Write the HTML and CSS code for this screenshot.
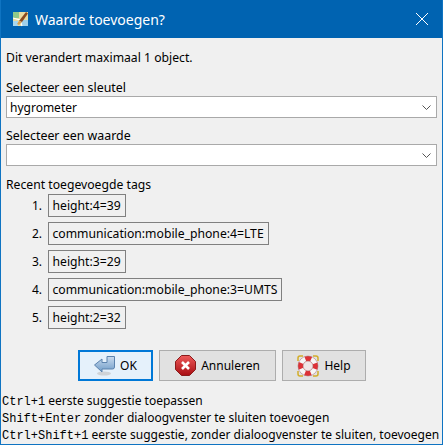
FILE: index.html
```html
<!DOCTYPE html>
<html lang="nl">

<head>
  <meta charset="UTF-8">
  <title>Waarde toevoegen?</title>
  <link rel="stylesheet" href="styles.css">
</head>

<body>
  <div class="window">
    <div class="titlebar">
      <svg class="app-icon" width="16" height="16" viewBox="0 0 16 16">
        <rect x="0" y="1" width="15" height="14" fill="#e8dca0" />
        <path d="M0 1h6v6H0z" fill="#8fc98a" />
        <path d="M8 9h7v6H8z" fill="#9fd0ea" />
        <path d="M0 10h5v5H0z" fill="#a8d7ee" />
        <path d="M0 7l7 2 2 6" fill="none" stroke="#fff" stroke-width="1.2" />
        <path d="M6 10L13 1l2 1.5L9 11z" fill="#8a4a1e" />
        <path d="M6 10l3 1-3 3-2-1z" fill="#d8a050" />
      </svg>
      <span class="title">Waarde toevoegen?</span>
      <svg class="close" width="12" height="12" viewBox="0 0 12 12">
        <path d="M0 0l12 12M12 0L0 12" stroke="#fff" stroke-width="1" fill="none" />
      </svg>
    </div>
    <div class="content">
      <p class="intro">Dit verandert maximaal 1 object.</p>

      <label class="field-label">Selecteer een sleutel</label>
      <div class="combo">
        <span>hygrometer</span>
        <svg width="9" height="5" viewBox="0 0 9 5">
          <path d="M0.500 0.500l4 4 4-4" fill="none" stroke="#555" />
        </svg>
      </div>

      <label class="field-label second">Selecteer een waarde</label>
      <div class="combo">
        <span></span>
        <svg width="9" height="5" viewBox="0 0 9 5">
          <path d="M0.500 0.500l4 4 4-4" fill="none" stroke="#555" />
        </svg>
      </div>

      <div class="recent-title">Recent toegevoegde tags</div>
      <div class="recent">
        <div class="recent-row"><span class="num">1.</span><span class="chip">height:4=39</span></div>
        <div class="recent-row"><span class="num">2.</span><span class="chip">communication:mobile_phone:4=LTE</span></div>
        <div class="recent-row"><span class="num">3.</span><span class="chip">height:3=29</span></div>
        <div class="recent-row"><span class="num">4.</span><span class="chip">communication:mobile_phone:3=UMTS</span></div>
        <div class="recent-row"><span class="num">5.</span><span class="chip">height:2=32</span></div>
      </div>

      <div class="buttons">
        <button class="btn btn-ok">
          <svg width="21" height="21" viewBox="0 0 21 21">
            <defs>
              <linearGradient id="okFill" x1="0" y1="0" x2="0" y2="1">
                <stop offset="0" stop-color="#c9dbee" />
                <stop offset="1" stop-color="#6f9cc8" />
              </linearGradient>
            </defs>
            <ellipse cx="10" cy="18.500" rx="7" ry="2" fill="#cfd3d7" />
            <path d="M0.500 10L8 4v3.500h5V1.500h7.500V12q0 2-2 2H8v3z" fill="url(#okFill)" stroke="#5b82ad" stroke-linejoin="round" />
          </svg>
          <span>OK</span>
        </button>
        <button class="btn btn-cancel">
          <svg width="21" height="21" viewBox="0 0 21 21">
            <defs>
              <linearGradient id="stopFill" x1="0" y1="0" x2="0" y2="1">
                <stop offset="0" stop-color="#ee5a5a" />
                <stop offset="1" stop-color="#a80d12" />
              </linearGradient>
            </defs>
            <path d="M6.500 0.500h8l6 6v8l-6 6h-8l-6-6v-8z" fill="url(#stopFill)" stroke="#8a1a1a" />
            <path d="M7 7l7 7M14 7l-7 7" stroke="#fff" stroke-width="2.600" fill="none" />
          </svg>
          <span>Annuleren</span>
        </button>
        <button class="btn btn-help">
          <svg width="22" height="22" viewBox="0 0 22 22">
            <g fill="none" stroke="#d2ad2a" stroke-width="1.500">
              <path d="M1 6V3q0-2 2-2h3" />
              <path d="M16 1h3q2 0 2 2v3" />
              <path d="M21 16v3q0 2-2 2h-3" />
              <path d="M6 21H3q-2 0-2-2v-3" />
            </g>
            <circle cx="11" cy="11" r="7.500" fill="none" stroke="#f6f6f6" stroke-width="5" />
            <circle cx="11" cy="11" r="7.500" fill="none" stroke="#dd3136" stroke-width="5" stroke-dasharray="5.890 5.890" stroke-dashoffset="2.945" />
            <circle cx="11" cy="11" r="10" fill="none" stroke="#a8686a" stroke-width="0.500" />
            <circle cx="11" cy="11" r="5" fill="#efe6e6" stroke="#b05a5a" stroke-width="0.600" />
          </svg>
          <span>Help</span>
        </button>
      </div>

      <div class="hints">
        <div class="hint"><code>Ctrl+1</code> eerste suggestie toepassen</div>
        <div class="hint"><code>Shift+Enter</code> zonder dialoogvenster te sluiten toevoegen</div>
        <div class="hint"><code>Ctrl+Shift+1</code> eerste suggestie, zonder dialoogvenster te sluiten, toevoegen</div>
      </div>
    </div>
  </div>
</body>

</html>
```

FILE: styles.css
```css
html,
body {
  margin: 0;
  padding: 0;
}

body {
  font-family: "Noto Sans", "DejaVu Sans", sans-serif;
  font-size: 12px;
  color: #000;
}

.window {
  width: 443px;
  height: 445px;
  box-sizing: border-box;
  border: 1px solid #0f74c2;
  border-top: none;
  background-color: #f0f0f0;
  overflow: hidden;
}

.titlebar {
  height: 38px;
  display: flex;
  align-items: center;
  margin: 0 -1px;
  padding: 0 8px 0 13px;
  background-color: #0063b1;
  color: white;
}

.title {
  flex: 1;
  margin-left: 6px;
  font-size: 14px;
}

.close {
  margin-right: 7px;
}

.content {
  padding: 11px 0 0 5px;
}

.intro {
  margin: 0;
  height: 17px;
  line-height: 17px;
  font-size: 12.2px;
}

.field-label {
  display: block;
  height: 17px;
  line-height: 17px;
  margin-top: 13px;
  font-size: 12.4px;
}

.field-label.second {
  margin-top: 9px;
}

.combo {
  width: 431px;
  height: 22px;
  box-sizing: border-box;
  display: flex;
  align-items: center;
  justify-content: space-between;
  padding: 0 5px 0 3px;
  border: 1px solid #a9a9a9;
  background-color: white;
}

.recent-title {
  height: 17px;
  line-height: 17px;
  margin-top: 10px;
  font-size: 12.2px;
}

.recent {
  display: flex;
  flex-direction: column;
  gap: 5px;
  margin-top: 1px;
}

.recent-row {
  display: flex;
  align-items: center;
  height: 23px;
}

.num {
  width: 36px;
  text-align: right;
  margin-right: 6px;
}

.chip {
  height: 23px;
  line-height: 21px;
  box-sizing: border-box;
  padding: 0 4px 0 3.5px;
  border: 1px solid #808080;
  font-size: 12.2px;
  white-space: nowrap;
}

.buttons {
  display: flex;
  gap: 6px;
  margin-top: 21px;
  margin-left: 72px;
}

.btn {
  height: 31px;
  box-sizing: border-box;
  display: flex;
  align-items: center;
  justify-content: center;
  gap: 5px;
  padding: 0;
  border: 1px solid #adadad;
  background-color: #e1e1e1;
  font: inherit;
  color: black;
}

.btn-ok {
  width: 75px;
  border: 2px solid #0078d7;
  background-color: #e5f1fb;
}

.btn-cancel {
  width: 117px;
}

.btn-help {
  width: 84px;
}

.hints {
  margin-top: 11px;
  margin-left: -4px;
}

.hint {
  height: 17px;
  line-height: 17px;
  white-space: nowrap;
}

code {
  font-family: "Liberation Mono", monospace;
  font-size: 12px;
}
```
